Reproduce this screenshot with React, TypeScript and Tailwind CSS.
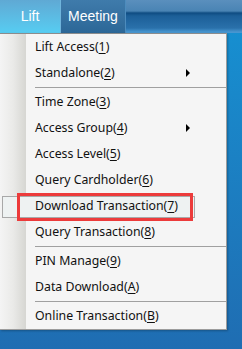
import React from 'react';

type Item =
  | { kind: 'item'; label: string; key: string; sub?: boolean; active?: boolean }
  | { kind: 'sep' };

const items: Item[] = [
  { kind: 'item', label: 'Lift Access', key: '1' },
  { kind: 'item', label: 'Standalone', key: '2', sub: true },
  { kind: 'sep' },
  { kind: 'item', label: 'Time Zone', key: '3' },
  { kind: 'item', label: 'Access Group', key: '4', sub: true },
  { kind: 'item', label: 'Access Level', key: '5' },
  { kind: 'item', label: 'Query Cardholder', key: '6' },
  { kind: 'item', label: 'Download Transaction', key: '7', active: true },
  { kind: 'item', label: 'Query Transaction', key: '8' },
  { kind: 'sep' },
  { kind: 'item', label: 'PIN Manage', key: '9' },
  { kind: 'item', label: 'Data Download', key: 'A' },
  { kind: 'sep' },
  { kind: 'item', label: 'Online Transaction', key: 'B' },
];

const MenuRow = ({ item }: { item: Extract<Item, { kind: 'item' }> }) => {
  return (
    <div className="relative flex h-[26px] items-center">
      {item.active && (
        <>
          <div className="absolute left-[2px] top-[3px] h-[22px] w-[193px] border border-[#a8a8a8] bg-[#eef2f2]" />
          <div className="absolute left-[17px] top-0 h-[28px] w-[176px] border-[3px] border-[#ec3b3b]" />
        </>
      )}
      <span className="relative pl-[35px] text-[12.3px] leading-none text-[#111]">
        {item.label}(<span className="underline underline-offset-2">{item.key}</span>)
      </span>
      {item.sub && (
        <span className="absolute left-[186px] top-[9px] h-0 w-0 border-y-[4px] border-l-[4px] border-y-transparent border-l-black" />
      )}
    </div>
  );
};

const App = () => {
  return (
    <div
      className="relative flex h-[349px] w-[242px] flex-col overflow-hidden bg-gradient-to-b from-[#1592d3] to-[#1f6db2]"
      style={{ fontFamily: '"Noto Sans", "Liberation Sans", sans-serif' }}
    >
      {/* top menu bar */}
      <div className="relative flex h-[33px] shrink-0 bg-[linear-gradient(to_bottom,#5a8fbd_0px,#4a84b4_11px,#0f4c82_13px,#1c5f98_16px,#2a71ab_28px,#4896d0_32px)]">
        <div
          className="flex w-[60px] items-center justify-center bg-gradient-to-b from-[#5fa9d4] to-[#56cdf2] text-[14px] text-white"
          style={{ fontFamily: '"Liberation Sans", Arial, sans-serif' }}
        >
          Lift
        </div>
        <div
          className="flex w-[66px] items-center justify-center border-l border-r border-l-[#6fb4dc] border-r-[#4d8cbd] bg-gradient-to-b from-[#3f7bab] to-[#2c6797] text-[14px] text-white"
          style={{ fontFamily: '"Liberation Sans", Arial, sans-serif' }}
        >
          Meeting
        </div>
      </div>

      {/* dropdown */}
      <div className="relative w-[227px] border-t border-r border-b border-t-[#8c8c8c] border-r-[#9c9c9c] border-b-[#9c9c9c] bg-[#f5f5f5] shadow-[1px_1px_2px_rgba(0,0,0,0.25)]">
        <div className="absolute inset-y-0 left-0 w-[26px] bg-gradient-to-r from-[#f4f4f4] via-[#eaeae8] to-[#d6d6d2]" />
        <div className="relative flex flex-col">
          {items.map((item, i) =>
            item.kind === 'sep' ? (
              <div key={i} className="flex h-[3px] items-center pl-[35px]">
                <div className="h-px w-full bg-[#a0a0a0]" />
              </div>
            ) : (
              <MenuRow key={i} item={item} />
            )
          )}
        </div>
      </div>
    </div>
  );
};

export default App;
